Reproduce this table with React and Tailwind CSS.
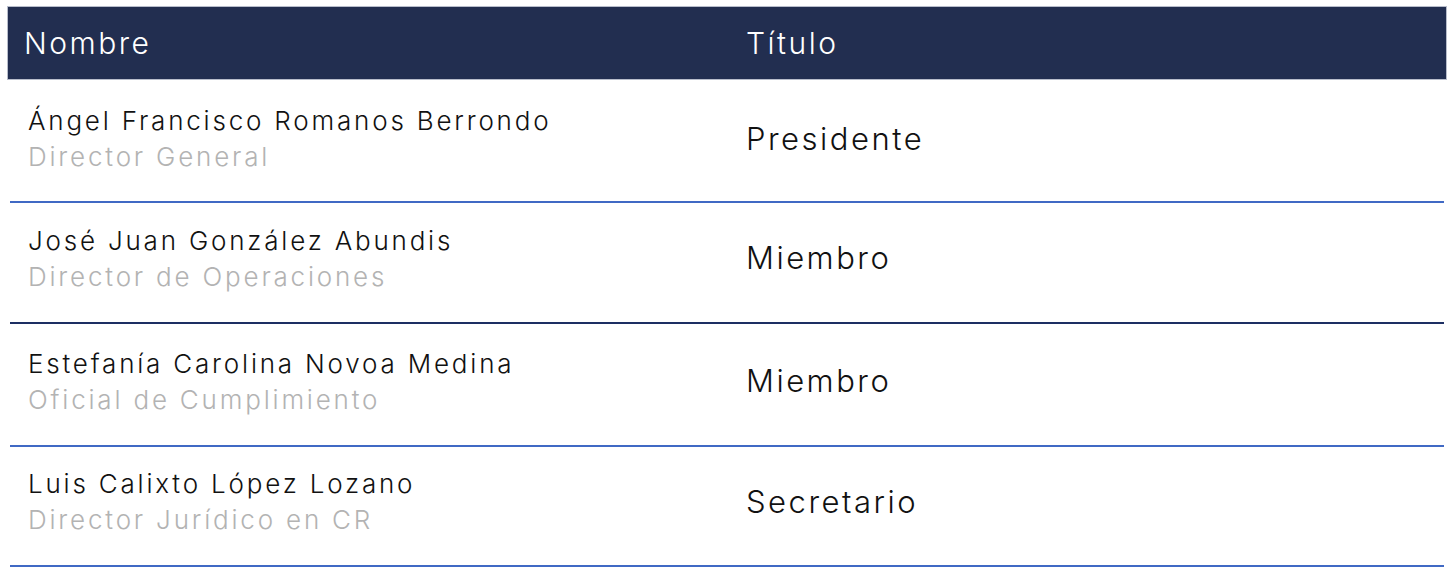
const members = [
  { name: 'Ángel Francisco Romanos Berrondo', role: 'Director General', title: 'Presidente', row: 'h-[123px] pb-[3px] border-[#4069c4]' },
  { name: 'José Juan González Abundis', role: 'Director de Operaciones', title: 'Miembro', row: 'h-[121px] pb-[8px] border-[#1d2f63]' },
  { name: 'Estefanía Carolina Novoa Medina', role: 'Oficial de Cumplimiento', title: 'Miembro', row: 'h-[123px] pb-[6px] border-[#4069c4]' },
  { name: 'Luis Calixto López Lozano', role: 'Director Jurídico en CR', title: 'Secretario', row: 'h-[120px] pb-[8px] border-[#4069c4]' },
];

const App = () => {
  return (
    <div className="min-h-screen bg-white pt-[6px] px-[7px] font-['Inter',sans-serif] font-light">
      <div className="flex h-[74px] items-center bg-[#222e50] border border-[#b8bdcb] text-white text-[30px] tracking-[2.5px]">
        <div className="w-[738px] pl-[16px]">Nombre</div>
        <div>Título</div>
      </div>

      <div className="mx-[3px]">
        {members.map((m) => (
          <div key={m.name} className={`flex items-center border-b-2 ${m.row}`}>
            <div className="w-[736px] pl-[18px] text-[26px] leading-[36px] tracking-[2.8px]">
              <div className="text-[#111]">{m.name}</div>
              <div className="text-[#b3b3b3]">{m.role}</div>
            </div>
            <div className="text-[31px] tracking-[2.5px] text-[#111]">{m.title}</div>
          </div>
        ))}
      </div>
    </div>
  );
};

export default App;
